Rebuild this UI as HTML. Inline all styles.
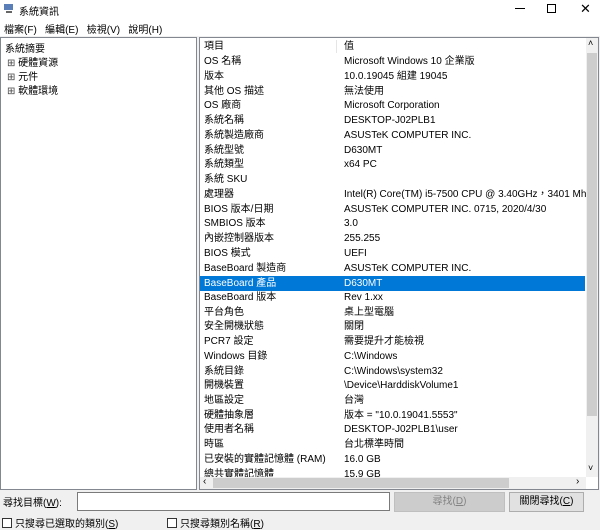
<!DOCTYPE html>
<html><head><meta charset="utf-8"><style>
*{margin:0;padding:0;box-sizing:border-box}
body{width:600px;height:530px;background:#f0f0f0;font-family:"Liberation Sans","Noto Sans CJK TC",sans-serif;font-size:11px;color:#000;position:relative;overflow:hidden}
.a{position:absolute;white-space:nowrap}
#title{left:0;top:0;width:600px;height:18px;background:#fff}
#menu{left:0;top:18px;width:600px;height:18px;background:#fff}
.lp{left:0;top:37px;width:197px;height:453px;background:#fff;border:1px solid #828790}
.rp{left:199px;top:37px;width:400px;height:453px;background:#fff;border:1px solid #828790}
.row{position:absolute;left:4px;height:15px;line-height:15px;width:380px}
.row span{position:absolute;left:140px}
.sel{background:#0078d7;color:#fff;left:0;width:385px;padding-left:4px}
.btn{position:absolute;height:20px;line-height:18px;text-align:center;border:1px solid #adadad;background:#e1e1e1}
.cb{display:inline-block;width:10px;height:10px;border:1px solid #333;background:#fff;vertical-align:-1px;margin-right:3px}
</style></head><body>
<div class="a" id="title">
 <svg class="a" style="left:3px;top:3px" width="12" height="11"><rect x="1" y="1" width="9" height="6" fill="#5a7fb8"/><rect x="3" y="8" width="6" height="2" fill="#666"/></svg>
 <div class="a" style="left:19px;top:3px;font-size:10px">系統資訊</div>
 <div class="a" style="left:515px;top:8px;width:10px;height:1px;background:#000"></div>
 <div class="a" style="left:547px;top:4px;width:9px;height:9px;border:1px solid #000"></div>
 <div class="a" style="left:580px;top:1px;font-size:13px">✕</div>
</div>
<div class="a" id="menu">
 <div class="a" style="left:4px;top:3px;font-size:10px">檔案(F)&nbsp;&nbsp;&nbsp;編輯(E)&nbsp;&nbsp;&nbsp;檢視(V)&nbsp;&nbsp;&nbsp;說明(H)</div>
</div>
<div class="a lp">
 <div class="a" style="left:4px;top:2px;font-size:10px">系統摘要</div>
 <div class="a" style="left:6px;top:16px;font-size:10px;color:#444">⊞ <span style="color:#000">硬體資源</span></div>
 <div class="a" style="left:6px;top:30px;font-size:10px;color:#444">⊞ <span style="color:#000">元件</span></div>
 <div class="a" style="left:6px;top:44px;font-size:10px;color:#444">⊞ <span style="color:#000">軟體環境</span></div>
</div>
<div class="a rp">
 <div style="position:absolute;left:0;top:0;width:386px;height:439px;overflow:hidden;font-size:10px">
  <div class="row" style="top:1px">項目<span>值</span></div>
  <div class="a" style="left:136px;top:2px;width:1px;height:13px;background:#e5e5e5"></div>
  <div class="row" style="top:16px">OS 名稱<span>Microsoft Windows 10 企業版</span></div>
  <div class="row" style="top:31px">版本<span>10.0.19045 組建 19045</span></div>
  <div class="row" style="top:46px">其他 OS 描述<span>無法使用</span></div>
  <div class="row" style="top:60px">OS 廠商<span>Microsoft Corporation</span></div>
  <div class="row" style="top:75px">系統名稱<span>DESKTOP-J02PLB1</span></div>
  <div class="row" style="top:90px">系統製造廠商<span>ASUSTeK COMPUTER INC.</span></div>
  <div class="row" style="top:105px">系統型號<span>D630MT</span></div>
  <div class="row" style="top:119px">系統類型<span>x64 PC</span></div>
  <div class="row" style="top:134px">系統 SKU</div>
  <div class="row" style="top:149px">處理器<span>Intel(R) Core(TM) i5-7500 CPU @ 3.40GHz，3401 Mhz，4</span></div>
  <div class="row" style="top:164px">BIOS 版本/日期<span>ASUSTeK COMPUTER INC. 0715, 2020/4/30</span></div>
  <div class="row" style="top:178px">SMBIOS 版本<span>3.0</span></div>
  <div class="row" style="top:193px">內嵌控制器版本<span>255.255</span></div>
  <div class="row" style="top:208px">BIOS 模式<span>UEFI</span></div>
  <div class="row" style="top:223px">BaseBoard 製造商<span>ASUSTeK COMPUTER INC.</span></div>
  <div class="row sel" style="top:238px">BaseBoard 產品<span style="left:144px">D630MT</span></div>
  <div class="row" style="top:252px">BaseBoard 版本<span>Rev 1.xx</span></div>
  <div class="row" style="top:267px">平台角色<span>桌上型電腦</span></div>
  <div class="row" style="top:281px">安全開機狀態<span>關閉</span></div>
  <div class="row" style="top:296px">PCR7 設定<span>需要提升才能檢視</span></div>
  <div class="row" style="top:311px">Windows 目錄<span>C:\Windows</span></div>
  <div class="row" style="top:326px">系統目錄<span>C:\Windows\system32</span></div>
  <div class="row" style="top:340px">開機裝置<span>\Device\HarddiskVolume1</span></div>
  <div class="row" style="top:355px">地區設定<span>台灣</span></div>
  <div class="row" style="top:370px">硬體抽象層<span>版本 = "10.0.19041.5553"</span></div>
  <div class="row" style="top:384px">使用者名稱<span>DESKTOP-J02PLB1\user</span></div>
  <div class="row" style="top:399px">時區<span>台北標準時間</span></div>
  <div class="row" style="top:414px">已安裝的實體記憶體 (RAM)<span>16.0 GB</span></div>
  <div class="row" style="top:429px">總共實體記憶體<span>15.9 GB</span></div>
 </div>
 <div class="a" style="left:386px;top:0;width:12px;height:439px;background:#f0f0f0"></div>
 <div class="a" style="left:387px;top:15px;width:10px;height:363px;background:#cdcdcd"></div>
 <div class="a" style="left:388px;top:0;font-size:9px">˄</div>
 <div class="a" style="left:388px;top:425px;font-size:9px">˅</div>
 <div class="a" style="left:0;top:439px;width:386px;height:12px;background:#f0f0f0"></div>
 <div class="a" style="left:13px;top:440px;width:296px;height:10px;background:#cdcdcd"></div>
 <div class="a" style="left:3px;top:438px;font-size:10px">‹</div>
 <div class="a" style="left:376px;top:438px;font-size:10px">›</div>
</div>
<div class="a" style="left:3px;top:494px;font-size:10px">尋找目標(<u>W</u>):</div>
<div class="a" style="left:77px;top:492px;width:313px;height:19px;background:#fff;border:1px solid #7a7a7a"></div>
<div class="btn" style="left:394px;top:492px;width:111px;background:#cccccc;border-color:#bfbfbf;color:#838383;font-size:10px">尋找(<u>D</u>)</div>
<div class="btn" style="left:509px;top:492px;width:75px;font-size:10px">關閉尋找(<u>C</u>)</div>
<div class="a" style="left:2px;top:515px;font-size:10px"><span class="cb"></span>只搜尋已選取的類別(<u>S</u>)</div>
<div class="a" style="left:167px;top:515px;font-size:10px"><span class="cb"></span>只搜尋類別名稱(<u>R</u>)</div>
</body></html>
